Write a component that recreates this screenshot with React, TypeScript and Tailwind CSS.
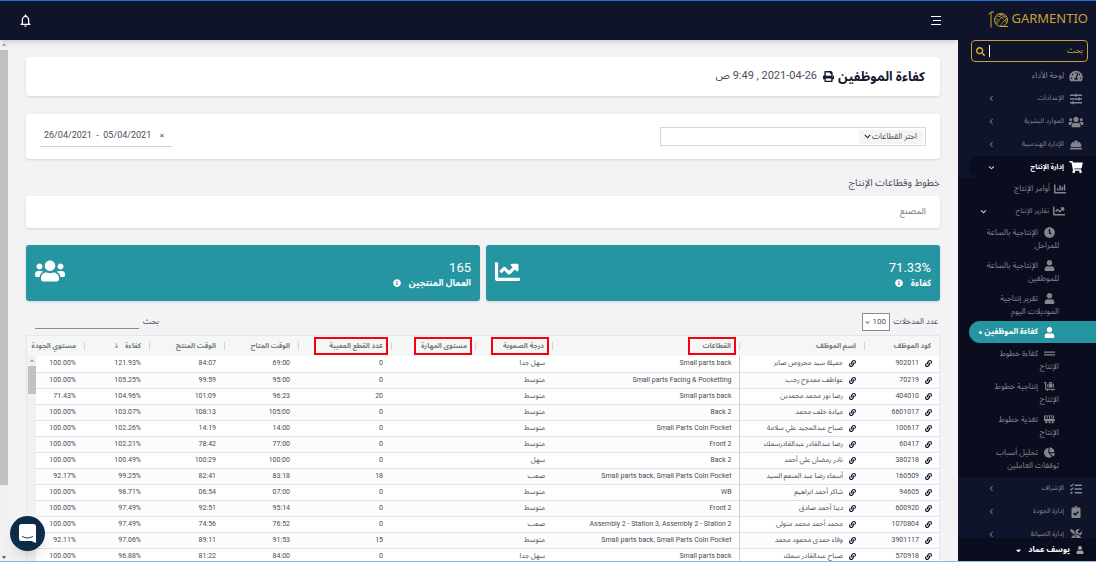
import React from 'react';
import {
  FaChartBar,
  FaChartLine,
  FaChartPie,
  FaChevronDown,
  FaClipboardCheck,
  FaClock,
  FaGripLines,
  FaHardHat,
  FaInfoCircle,
  FaLink,
  FaLuggageCart,
  FaPrint,
  FaSearch,
  FaShoppingCart,
  FaSlidersH,
  FaTachometerAlt,
  FaTasks,
  FaTools,
  FaUser,
  FaUsers,
} from 'react-icons/fa';
import { FaAngleDown, FaAngleLeft, FaCaretDown, FaCaretUp } from 'react-icons/fa6';
import { MdNotificationsNone } from 'react-icons/md';

interface IconProps {
  size?: number;
  className?: string;
}

interface NavItem {
  label: string;
  icon: React.ComponentType<IconProps>;
  active?: boolean;
}

interface Column {
  label: string;
  width: string;
  box?: string;
  sorted?: boolean;
}

// Slatted feeder cart
const FeederIcon = ({ size = 12, className }: IconProps) => (
  <svg viewBox="0 0 24 18" width={size} height={size} className={className} fill="currentColor">
    <path fillRule="evenodd" d="M0 0h22v9h2v3H0zM3 2v6h3V2zM8 2v6h3V2zM13 2v6h3V2zM18 2v6h2V2z" />
    <circle cx="5" cy="15" r="2.5" />
    <circle cx="12" cy="15" r="2.5" />
    <circle cx="19" cy="15" r="2.5" />
  </svg>
);

const TOP_ITEMS: NavItem[] = [
  { label: 'الإعدادات', icon: FaSlidersH },
  { label: 'الموارد البشرية', icon: FaUsers },
  { label: 'الإدارة الهندسية', icon: FaHardHat },
];

const REPORT_ITEMS: NavItem[] = [
  { label: 'الإنتاجية بالساعة للمراحل', icon: FaClock },
  { label: 'الإنتاجية بالساعة للموظفين', icon: FaUser },
  { label: 'تقرير إنتاجية الموديلات اليوم', icon: FaUser },
  { label: 'كفاءة الموظفين', icon: FaUser, active: true },
  { label: 'كفاءة خطوط الإنتاج', icon: FaGripLines },
  { label: 'إنتاجية خطوط الإنتاج', icon: FaLuggageCart },
  { label: 'تغذية خطوط الإنتاج', icon: FeederIcon },
  { label: 'تحليل أسباب توقفات العاملين', icon: FaChartPie },
];

const BOTTOM_ITEMS: NavItem[] = [
  { label: 'الإشراف', icon: FaTasks },
  { label: 'إدارة الجودة', icon: FaClipboardCheck },
  { label: 'إدارة الصيانة', icon: FaTools },
];

const COLUMNS: Column[] = [
  { label: 'كود الموظف', width: 'w-[75px]' },
  { label: 'اسم الموظف', width: 'w-[125px]' },
  { label: 'القطاعات', width: '', box: 'w-[48px]' },
  { label: 'درجة الصعوبة', width: 'w-[77px]', box: 'w-[58px]' },
  { label: 'مستوى المهارة', width: 'w-[84px]', box: 'w-[58px]' },
  { label: 'عدد القطع المعيبة', width: 'w-[93px]', box: 'w-[74px]' },
  { label: 'الوقت المتاح', width: 'w-[74px]' },
  { label: 'الوقت المنتج', width: 'w-[75px]' },
  { label: 'كفاءة', width: 'w-[65px]', sorted: true },
  { label: 'مستوي الجودة', width: 'w-[57px]' },
];

// code, name, sections, difficulty, defects, available, produced, efficiency, quality
const ROWS = [
  ['902011', 'جميلة سيد محروص صابر', 'Small parts back', 'سهل جدا', '0', '69:00', '84:07', '121.93%', '100.00%'],
  ['70219', 'عواطف ممدوح رجب', 'Small parts Facing & Pocketting', 'متوسط', '0', '95:00', '99:59', '105.25%', '100.00%'],
  ['404010', 'رضا نور محمد محمدين', 'Small parts back', 'متوسط', '20', '96:23', '101:09', '104.96%', '71.43%'],
  ['6601017', 'ميادة خلف محمد', 'Back 2', 'متوسط', '0', '105:00', '108:13', '103.07%', '100.00%'],
  ['100617', 'صباح عبدالمجيد علي سلامة', 'Small Parts Coin Pocket', 'متوسط', '0', '14:00', '14:19', '102.26%', '100.00%'],
  ['60417', 'رضا عبدالقادر عبدالقادرسمك', 'Front 2', 'متوسط', '0', '77:00', '78:42', '102.21%', '100.00%'],
  ['380218', 'نادر رمضان علي أحمد', 'Back 2', 'سهل', '0', '100:00', '100:29', '100.49%', '100.00%'],
  ['160509', 'أسماء رضا عبد المنعم السيد', 'Small parts back, Small Parts Coin Pocket', 'صعب', '18', '83:18', '82:41', '99.25%', '92.17%'],
  ['94605', 'شاكر أحمد ابراهيم', 'WB', 'متوسط', '0', '07:00', '06:54', '98.71%', '100.00%'],
  ['600920', 'دينا أحمد صادق', 'Front 2', 'متوسط', '0', '95:14', '92:51', '97.49%', '100.00%'],
  ['1070804', 'محمد أحمد محمد متولى', 'Assembly 2 - Station 3, Assembly 2 - Station 2', 'صعب', '0', '76:52', '74:56', '97.49%', '100.00%'],
  ['3901117', 'وفاء حمدى محمود محمد', 'Small parts back, Small Parts Coin Pocket', 'متوسط', '15', '91:53', '89:11', '97.06%', '92.11%'],
  ['570918', 'صباح عبدالقادر سمك', 'Small parts back', 'سهل جدا', '0', '84:00', '81:22', '96.88%', '100.00%'],
];

const Logo = () => (
  <a href="#" dir="ltr" className="flex h-9 shrink-0 items-center justify-end gap-0.5 pr-2 text-[#c8a232]">
    <svg viewBox="0 0 42 34" className="h-[17px] w-[21px]" fill="none" stroke="currentColor" strokeWidth="2">
      <path d="M6 33V3M1 7l5-5h6" />
      <circle cx="26" cy="18" r="13" />
      <path d="M16 10c8 0 16 4 21 14M21 6c7 1 13 5 17 11M36 10c-9 1-17 8-19 18M39 17c-7 1-12 6-14 14M14 15c4 1 7 3 9 6M13 21c3 0 5 2 6 4M30 6c-3 1-5 2-7 4" strokeWidth="1.5" />
      <path d="M26 31h14" />
    </svg>
    <span className="font-['Noto_Sans'] text-[13px]">GARMENTIO</span>
  </a>
);

const GroupLink = ({ item }: { item: NavItem }) => (
  <a href="#" className="flex h-[23px] items-center gap-1 pr-3 pl-[30px] text-[7px]">
    <item.icon className="w-4 shrink-0" size={12} />
    <span className="flex-1 truncate">{item.label}</span>
    <FaAngleLeft size={7} />
  </a>
);

const Sidebar = () => (
  <aside className="flex w-[138px] shrink-0 flex-col overflow-hidden bg-[#0f142b] text-[8px] text-[#85868c]">
    <Logo />
    <label className="mt-[3px] mr-2 ml-[13px] flex h-[22px] shrink-0 items-center rounded-sm border border-[#c8a232] px-1">
      <input
        type="text"
        aria-label="بحث"
        placeholder="بحث"
        className="min-w-0 flex-1 bg-transparent text-[8px] outline-none placeholder:text-[#c8a232]"
      />
      <span className="ml-1 h-3 w-px bg-white" />
      <FaSearch size={9} className="text-[#e0b02c]" />
    </label>

    <nav className="min-h-0 flex-1 overflow-hidden pt-[3px]">
      <a href="#" className="flex h-[22px] items-center gap-1 pr-3">
        <FaTachometerAlt className="w-4" size={12} />
        لوحة الأداء
      </a>
      {TOP_ITEMS.map((item) => (
        <GroupLink key={item.label} item={item} />
      ))}

      <div className="bg-[#0a0d1e]">
        <div className="bg-[#0f142b]">
          <a href="#" className="ml-[11px] flex h-[22px] items-center gap-1 rounded-l-full bg-[#0a0d1e] pr-3 pl-[19px] text-[7px] font-bold text-white">
            <FaShoppingCart className="w-4 shrink-0" size={12} />
            <span className="flex-1">إدارة الإنتاج</span>
            <FaAngleDown size={7} />
          </a>
        </div>
        <a href="#" className="flex h-[22px] items-center gap-1 pr-[30px]">
          <FaChartBar size={12} />
          أوامر الإنتاج
        </a>
        <a href="#" className="flex h-[22px] items-center gap-1 pr-[31px] pl-[22px] text-[7px]">
          <FaChartLine size={12} />
          <span className="flex-1">تقارير الإنتاج</span>
          <FaAngleDown size={7} className="text-white" />
        </a>
        <div className="pb-0.5">
          {REPORT_ITEMS.map((item) =>
            item.active ? (
              <a
                key={item.label}
                href="#"
                className="ml-[11px] flex h-[22px] items-center gap-1.5 rounded-l-full bg-[#2595a2] pr-[41px] font-bold whitespace-nowrap text-white"
              >
                <FaUser size={11} />
                {item.label}
                <span className="-mr-1 size-[3px] shrink-0 rounded-full bg-white" />
              </a>
            ) : (
              <a key={item.label} href="#" className="block pt-1 pr-[37px] pb-[3px] pl-[26px] leading-[13px]">
                <item.icon className="mr-1 ml-1.5 inline-block align-middle" size={11} />
                {item.label}
              </a>
            )
          )}
        </div>
      </div>

      {BOTTOM_ITEMS.map((item) => (
        <GroupLink key={item.label} item={item} />
      ))}
    </nav>

    <button className="flex h-6 shrink-0 items-center gap-1.5 bg-[#0a0d1e] pr-3 font-bold text-white">
      <FaUser size={8} className="text-[#a0a1a6]" />
      يوسف عماد
      <FaCaretDown size={7} />
    </button>
  </aside>
);

const StatCard = ({ value, label, children }: { value: string; label: string; children: React.ReactNode }) => (
  <div className="flex h-14 flex-1 items-center justify-between rounded-[3px] bg-[#2595a2] px-[9px] text-white shadow">
    <div className="pt-1">
      <div dir="ltr" className="text-right text-[13px] leading-4">{value}</div>
      <div className="flex items-center gap-2 text-[9px] leading-[15px] font-bold">
        {label}
        <FaInfoCircle size={8} />
      </div>
    </div>
    {children}
  </div>
);

const EmployeeTable = () => (
  <div className="relative border-x border-t border-[#e4e6e8] bg-white">
    <table className="w-full table-fixed border-collapse text-[7px] leading-none text-[#4a4a4f]">
      <thead>
        <tr className="h-5 bg-[#f5f7f7] text-[#77797e]">
          {COLUMNS.map((col, i) => (
            <th
              key={col.label}
              scope="col"
              className={`${col.width} ${col.box ? 'pr-[3px]' : 'pr-2'} relative p-0 text-right font-bold whitespace-nowrap`}
            >
              {col.box ? (
                <span className={`${col.box} flex h-[18px] items-center border-2 border-[#f5000c] pr-[3px]`}>{col.label}</span>
              ) : (
                <span className="flex items-center gap-1.5">
                  {col.label}
                  {col.sorted && <span className="font-normal">↓</span>}
                </span>
              )}
              {i < COLUMNS.length - 1 && <span className="absolute top-1.5 left-0 h-2 w-px bg-[#d5d8da]" />}
            </th>
          ))}
        </tr>
      </thead>
      <tbody>
        {ROWS.map(([code, name, sections, level, defects, available, produced, efficiency, quality]) => (
          <tr key={code} className="h-4 border-b border-[#dfe2e5] even:bg-[#fbfcfe]">
            <td className="pr-[7px]">
              <a href="#" className="flex items-center gap-1.5">
                <FaLink size={7} className="text-[#11152c]" />
                {code}
              </a>
            </td>
            <td className="border-l border-[#c9ccd0] pr-2">
              <a href="#" className="flex items-center gap-1.5 whitespace-nowrap">
                <FaLink size={7} className="text-[#11152c]" />
                {name}
              </a>
            </td>
            <td dir="ltr" className="pr-[7px] text-right whitespace-nowrap">{sections}</td>
            <td className="pr-[7px]">{level}</td>
            <td />
            <td className="pr-2">{defects}</td>
            <td dir="ltr" className="pr-2 text-right">{available}</td>
            <td dir="ltr" className="pr-2 text-right">{produced}</td>
            <td dir="ltr" className="pr-2 text-right">{efficiency}</td>
            <td dir="ltr" className="pr-2 text-right">{quality}</td>
          </tr>
        ))}
      </tbody>
    </table>
    <div className="absolute top-5 bottom-0 left-0 flex w-[9px] flex-col items-center bg-[#f1f1f1]">
      <FaCaretUp size={6} className="my-0.5 text-[#a3a3a3]" />
      <div className="h-7 w-2 bg-[#c1c1c1]" />
    </div>
  </div>
);

export default function App() {
  return (
    <div
      dir="rtl"
      lang="ar"
      className="relative flex h-screen overflow-hidden border-t border-[#1e6fd0] bg-[#f3f3f6] font-['Roboto','Noto_Sans_Arabic','DejaVu_Sans',sans-serif] text-[#4c4d5c]"
    >
      <Sidebar />

      <div className="flex min-w-0 flex-1 flex-col">
        <header className="z-10 flex h-[39px] shrink-0 items-center justify-between bg-[#0f142b] pr-[17px] pl-[18px] text-white shadow-md">
          <button aria-label="القائمة" className="flex w-2.5 flex-col items-start gap-[3px]">
            <span className="h-px w-2.5 bg-white" />
            <span className="h-px w-2 bg-white" />
            <span className="h-px w-2.5 bg-white" />
          </button>
          <button aria-label="الإشعارات">
            <MdNotificationsNone size={15} />
          </button>
        </header>

        <div className="flex min-h-0 flex-1">
          <main className="min-w-0 flex-1 overflow-hidden px-[18px] pt-[17px]">
            <section className="flex h-[39px] items-center gap-1 rounded-[3px] bg-white px-[15px] shadow">
              <h1 className="text-[13px] font-bold text-[#151931]">كفاءة الموظفين</h1>
              <FaPrint size={11} className="text-[#151931]" />
              <p className="pr-0.5 text-[11px]">
                <bdi dir="ltr">2021-04-26</bdi> , <bdi dir="ltr">9:49</bdi> ص
              </p>
            </section>

            <section className="mt-[18px] flex h-[45px] items-center justify-between rounded-[3px] bg-white px-[14px] shadow">
              <div className="flex h-[19px] w-[30%] items-center border border-[#d8d9dc] px-0.5">
                <div className="relative flex h-[14px] items-center rounded-sm bg-[#f4f4f4]">
                  <select aria-label="القطاعات" className="h-[14px] w-16 appearance-none bg-transparent pr-1.5 text-[8px]">
                    <option>اختر القطاعات</option>
                  </select>
                  <FaChevronDown size={7} className="pointer-events-none absolute inset-y-0 left-[5px] my-auto text-[#222]" />
                </div>
              </div>
              <div className="flex h-5 w-[132px] items-center gap-2 border-b border-[#cfcfd2] pr-2">
                <button aria-label="مسح" className="text-[8px]">×</button>
                <input
                  type="text"
                  dir="ltr"
                  aria-label="الفترة"
                  defaultValue="26/04/2021  -  05/04/2021"
                  className="min-w-0 flex-1 pl-1 text-left text-[9px] whitespace-pre outline-none"
                />
              </div>
            </section>

            <h2 className="mt-4 h-[21px] text-[10px] leading-4">خطوط وقطاعات الإنتاج</h2>
            <section className="flex h-8 items-center rounded-[3px] bg-white px-[14px] text-[9px] text-[#77777c] shadow">
              المصنع
            </section>

            <section className="mt-[17px] flex gap-1.5">
              <StatCard value="71.33%" label="كفاءة">
                <FaChartLine size={25} className="mb-1" />
              </StatCard>
              <StatCard value="165" label="العمال المنتجين">
                <FaUsers size={30} className="mb-1" />
              </StatCard>
            </section>

            <div className="flex h-[34px] items-center justify-between pt-2 pr-0.5 pl-[9px] text-[8px]">
              <label className="flex items-center gap-1">
                عدد المدخلات
                <span className="relative flex">
                  <select dir="ltr" className="h-[18px] w-7 appearance-none border border-[#8b8b90] bg-white pl-2.5 text-[8px]">
                    <option>100</option>
                  </select>
                  <FaChevronDown size={5} className="pointer-events-none absolute inset-y-0 left-[3px] my-auto" />
                </span>
              </label>
              <label className="flex items-center gap-1">
                بحث
                <input type="text" className="h-[13px] w-[104px] border-b border-[#8b8b90] bg-transparent outline-none" />
              </label>
            </div>

            <EmployeeTable />
          </main>

          <div className="flex w-2 shrink-0 flex-col items-center bg-[#f1f1f1]">
            <FaCaretUp size={6} className="my-0.5 shrink-0 text-[#a3a3a3]" />
            <div className="h-5/6 w-full bg-[#c1c1c1]" />
            <FaCaretDown size={6} className="mt-auto mb-0.5 shrink-0 text-[#555]" />
          </div>
        </div>
      </div>

      <button
        aria-label="محادثة"
        className="absolute bottom-[11px] left-2.5 z-20 flex size-[35px] items-center justify-center rounded-full bg-[#0d2c4a] shadow-lg"
      >
        <svg viewBox="0 0 34 38" className="h-[19px] w-[17px]">
          <path fill="#fff" d="M5 0h24a5 5 0 0 1 5 5v33l-9-4H5a5 5 0 0 1-5-5V5a5 5 0 0 1 5-5z" />
          <path d="M7 25c6 4 14 4 20 0" fill="none" stroke="#0d2c4a" strokeWidth="2" strokeLinecap="round" />
        </svg>
      </button>

      <div className="absolute inset-x-0 bottom-0 z-30 h-px bg-[#8fb8ea]" />
    </div>
  );
}
